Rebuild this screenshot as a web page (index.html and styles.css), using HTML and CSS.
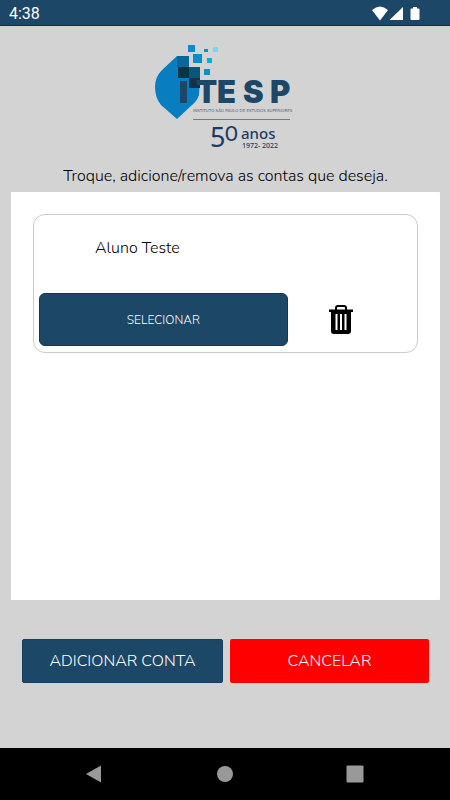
FILE: index.html
```html
<!DOCTYPE html>
<html lang="pt-BR">
<head>
<meta charset="utf-8">
<meta name="viewport" content="width=device-width, initial-scale=1">
<title>ITESP - Contas</title>
<link rel="stylesheet" href="styles.css">
</head>
<body>
<header class="status">
  <span class="clock">4:38</span>
  <svg class="status-icons" width="50" height="16" viewBox="0 0 50 16" fill="#fff" aria-hidden="true">
    <path d="M0 4Q8-3 16 4L8 14.500Z"/>
    <path d="M31 1V14H17.500Z"/>
    <path d="M41 1h4v1.500h1.500q1 0 1 1V13q0 1-1 1h-7q-1 0-1-1V3.500q0-1 1-1H41Z"/>
  </svg>
</header>
<main class="screen">
  <svg class="logo" width="151" height="115" viewBox="150 40 151 115" role="img" aria-label="ITESP 50 anos">
    <path d="M177 56H189V68H200V80L199 95Q197 101 192 105L177 119L161 105Q155 98 155 87Q155 77 162 70Z" fill="#087dc0"/>
    <path d="M177 56h12v11h-12z" fill="#07679a"/>
    <path d="M178 67h11v11h-11z" fill="#0b3443"/>
    <path d="M189 67h11v11h-11z" fill="#07577d"/>
    <path d="M189 78h11v10h-11z" fill="#113247"/>
    <path d="M188 45h7v7h-7zM193 54h9v9h-9z" fill="#078dcc"/>
    <path d="M204 49h4v3h-4zM204 69h6v6h-6z" fill="#0892c8"/>
    <path d="M207 58h5v5h-5z" fill="#06aee3"/>
    <path d="M213 47h5v5h-5z" fill="#69dcfb"/>
    <path d="M180 81h7v22h-7z" fill="#1c4766"/>
    <text class="brand" x="196 217 243 270" y="103">TESP</text>
    <text class="tagline" x="193" y="112">INSTITUTO SÃO PAULO DE ESTUDOS SUPERIORES</text>
    <path d="M193 119.500H290" stroke="#77778a"/>
    <text class="five" x="210" y="147">5</text>
    <text class="zero" x="225" y="141">0</text>
    <text class="years" x="241" y="139">anos</text>
    <text class="dates" x="242" y="148">1972- 2022</text>
  </svg>
  <h1 class="lead">Troque, adicione/remova as contas que deseja.</h1>
  <section class="panel">
    <article class="account">
      <h2 class="name">Aluno Teste</h2>
      <div class="row">
        <button class="select" type="button">SELECIONAR</button>
        <button class="remove" type="button" aria-label="Remover conta">
          <svg width="24" height="30" viewBox="0 0 24 30" aria-hidden="true">
            <path d="M7 5V3q0-2 2-2h6q2 0 2 2v2" fill="none" stroke="#000" stroke-width="2"/>
            <path fill-rule="evenodd" d="M0 4.500h24V7h-2v19q0 3-3 3H5q-3 0-3-3V7H0ZM6.500 9v16h2V9ZM11 9v16h2V9ZM15.500 9v16h2V9Z"/>
          </svg>
        </button>
      </div>
    </article>
  </section>
  <div class="actions">
    <button class="add" type="button">ADICIONAR CONTA</button>
    <button class="cancel" type="button">CANCELAR</button>
  </div>
</main>
<nav class="system">
  <button type="button" aria-label="Voltar"><svg width="20" height="20" viewBox="0 0 20 20"><path d="M16 1.500V18.500L1 10Z"/></svg></button>
  <button type="button" aria-label="Início"><svg width="20" height="20" viewBox="0 0 20 20"><circle cx="10" cy="10" r="8"/></svg></button>
  <button type="button" aria-label="Recentes"><svg width="20" height="20" viewBox="0 0 20 20"><rect x="1.500" y="1.500" width="17" height="17" rx="1"/></svg></button>
</nav>
</body>
</html>
```
FILE: styles.css
```css
* { box-sizing: border-box; }
body {
  margin: 0;
  min-height: 100vh;
  display: flex;
  flex-direction: column;
  background: #d3d3d3;
  color: #000;
  font-family: Nunito, "Open Sans", sans-serif;
  font-weight: 300;
}
button {
  border: 0;
  padding: 0;
  font: inherit;
  color: #fff;
  background: none;
}
svg { display: block; }
.status {
  display: flex;
  justify-content: space-between;
  align-items: center;
  height: 26px;
  padding: 2px 28px 0 9px;
  background: #1c4766;
  border-bottom: 1px solid #0b2c55;
}
.clock {
  font: 16px/24px Roboto, sans-serif;
  color: #fff;
}
.screen {
  flex: 1;
  display: flex;
  flex-direction: column;
  padding: 14px 10px 0 11px;
}
.logo { align-self: center; }
.brand { font: 900 31px Inter, sans-serif; fill: #1c4766; }
.tagline { font: 4px "DejaVu Sans", sans-serif; fill: #55657a; }
.five { font: 27px "Noto Sans", sans-serif; fill: #1b3a66; }
.zero { font: 22px Lato, sans-serif; fill: #1b3a66; }
.years { font: 500 15px "Noto Sans", sans-serif; fill: #1b3a66; }
.dates { font: 500 7px "Noto Sans", sans-serif; fill: #1b3a66; }
.lead {
  margin: 9px 0 4px;
  font-size: 16px;
  line-height: 24px;
  font-weight: 300;
  text-align: center;
}
.panel {
  flex: 1;
  padding: 22px;
  background: #fff;
  border-radius: 1px;
}
.account {
  padding: 0 5px 6px;
  border: 1px solid #ccc;
  border-radius: 12px;
}
.name {
  margin: 0;
  padding: 21px 56px 33px;
  font-size: 16px;
  line-height: 24px;
  font-weight: 300;
}
.row {
  display: grid;
  grid-template-columns: 2fr 1fr;
}
.select {
  height: 53px;
  border: 1px solid #0e3857;
  border-radius: 6px;
  background: #1c4766;
  font-size: 12px;
}
.remove {
  display: flex;
  justify-content: center;
  align-items: center;
  padding-right: 18px;
}
.actions {
  display: flex;
  gap: 7px;
  padding: 39px 11px 65px;
}
.add, .cancel {
  flex: 1;
  height: 44px;
  border-radius: 2px;
  font-size: 16px;
}
.add { background: #1c4766; border: 1px solid #163e60; }
.cancel { background: #f00; }
.system {
  display: flex;
  justify-content: center;
  gap: 110px;
  height: 52px;
  background: #000;
}
.system button { display: flex; align-items: center; }
.system svg { fill: #999; }
```
